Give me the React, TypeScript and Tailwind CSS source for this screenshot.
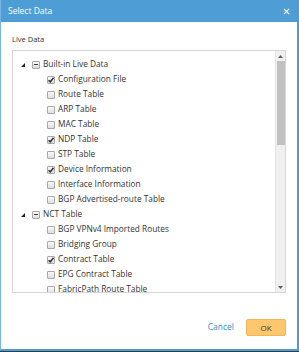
const font = { fontFamily: '"Open Sans", "Liberation Sans", sans-serif' };

type Item = { label: string; checked?: boolean };

const builtIn: Item[] = [
  { label: 'Configuration File', checked: true },
  { label: 'Route Table' },
  { label: 'ARP Table' },
  { label: 'MAC Table' },
  { label: 'NDP Table', checked: true },
  { label: 'STP Table' },
  { label: 'Device Information', checked: true },
  { label: 'Interface Information' },
  { label: 'BGP Advertised-route Table' },
];

const nct: Item[] = [
  { label: 'BGP VPNv4 Imported Routes' },
  { label: 'Bridging Group' },
  { label: 'Contract Table', checked: true },
  { label: 'EPG Contract Table' },
  { label: 'FabricPath Route Table' },
];

function Box({ checked, partial }: { checked?: boolean; partial?: boolean }) {
  return (
    <span className="relative w-[8px] h-[8px] shrink-0 border border-[#a8a8a8] rounded-[1px] bg-gradient-to-b from-[#fafafa] to-[#dedede]">
      {checked && (
        <svg viewBox="0 0 8 8" className="absolute -left-[1px] -top-[1px] w-[8px] h-[8px]">
          <path d="M1.6 4.2 L3.3 5.9 L6.5 1.8" fill="none" stroke="#2b2b2b" strokeWidth="1.5" />
        </svg>
      )}
      {partial && <span className="absolute left-[1px] right-[1px] top-[2.5px] h-[1px] bg-[#3a3a3a]" />}
    </span>
  );
}

function Group({ label, items }: { label: string; items: Item[] }) {
  return (
    <div>
      <div className="h-[15px] flex items-center">
        <svg viewBox="0 0 4 4" className="w-[4px] h-[4px] ml-[8px] mr-[7px]">
          <path d="M4 0 L4 4 L0 4 Z" fill="#1f1f1f" />
        </svg>
        <Box partial />
        <span className="ml-[3px]">{label}</span>
      </div>
      {items.map((it) => (
        <div key={it.label} className="h-[15px] flex items-center pl-[34px]">
          <Box checked={it.checked} />
          <span className="ml-[3px]">{it.label}</span>
        </div>
      ))}
    </div>
  );
}

export default function App() {
  return (
    <div className="w-[299px] h-[352px] flex flex-col bg-[#3b3b3b]" style={font}>
      <div className="h-[351px] flex flex-col bg-white border-l border-l-[#75b6e6] border-r-2 border-r-[#4c9cd3] border-b-2 border-b-[#4c9cd3]">
        <div className="h-[22px] shrink-0 bg-[#4e9ed5] flex items-center justify-between pl-[7px] pr-[7px]">
          <span className="text-white text-[8.5px]">Select Data</span>
          <svg viewBox="0 0 8 8" className="w-[7px] h-[7px]">
            <path d="M1 1 L7 7 M7 1 L1 7" stroke="#fff" strokeWidth="1.3" />
          </svg>
        </div>
        <div className="flex-1 flex flex-col px-[11px] pt-[11px]">
          <div className="h-[12px] leading-[12px] text-[7.5px] text-[#333]">Live Data</div>
          <div className="mt-[5px] h-[243px] border border-[#d6d6d6] flex overflow-hidden">
            <div className="flex-1 overflow-hidden pt-[6px] text-[8.3px] text-[#333]">
              <Group label="Built-in Live Data" items={builtIn} />
              <Group label="NCT Table" items={nct} />
            </div>
            <div className="w-[10px] shrink-0 bg-[#f0f0f0] border-l border-l-[#e4e4e4] flex flex-col items-center">
              <div className="h-[10px] flex items-center justify-center">
                <svg viewBox="0 0 5 3" className="w-[5px] h-[3px]">
                  <path d="M2.5 0 L5 3 L0 3 Z" fill="#606060" />
                </svg>
              </div>
              <div className="w-[8px] h-[84px] bg-[#c1c1c1]" />
              <div className="flex-1" />
              <div className="h-[10px] flex items-center justify-center">
                <svg viewBox="0 0 5 3" className="w-[5px] h-[3px]">
                  <path d="M0 0 L5 0 L2.5 3 Z" fill="#606060" />
                </svg>
              </div>
            </div>
          </div>
          <div className="mt-[26px] flex items-center justify-end gap-[12px]">
            <span className="text-[8.5px] text-[#3c8ccb]">Cancel</span>
            <button className="w-[40px] h-[17px] rounded-[2px] bg-[#fec66d] border border-[#f3b657] text-[8px] text-[#3a3a3a] flex items-center justify-center">
              OK
            </button>
          </div>
        </div>
      </div>
    </div>
  );
}
